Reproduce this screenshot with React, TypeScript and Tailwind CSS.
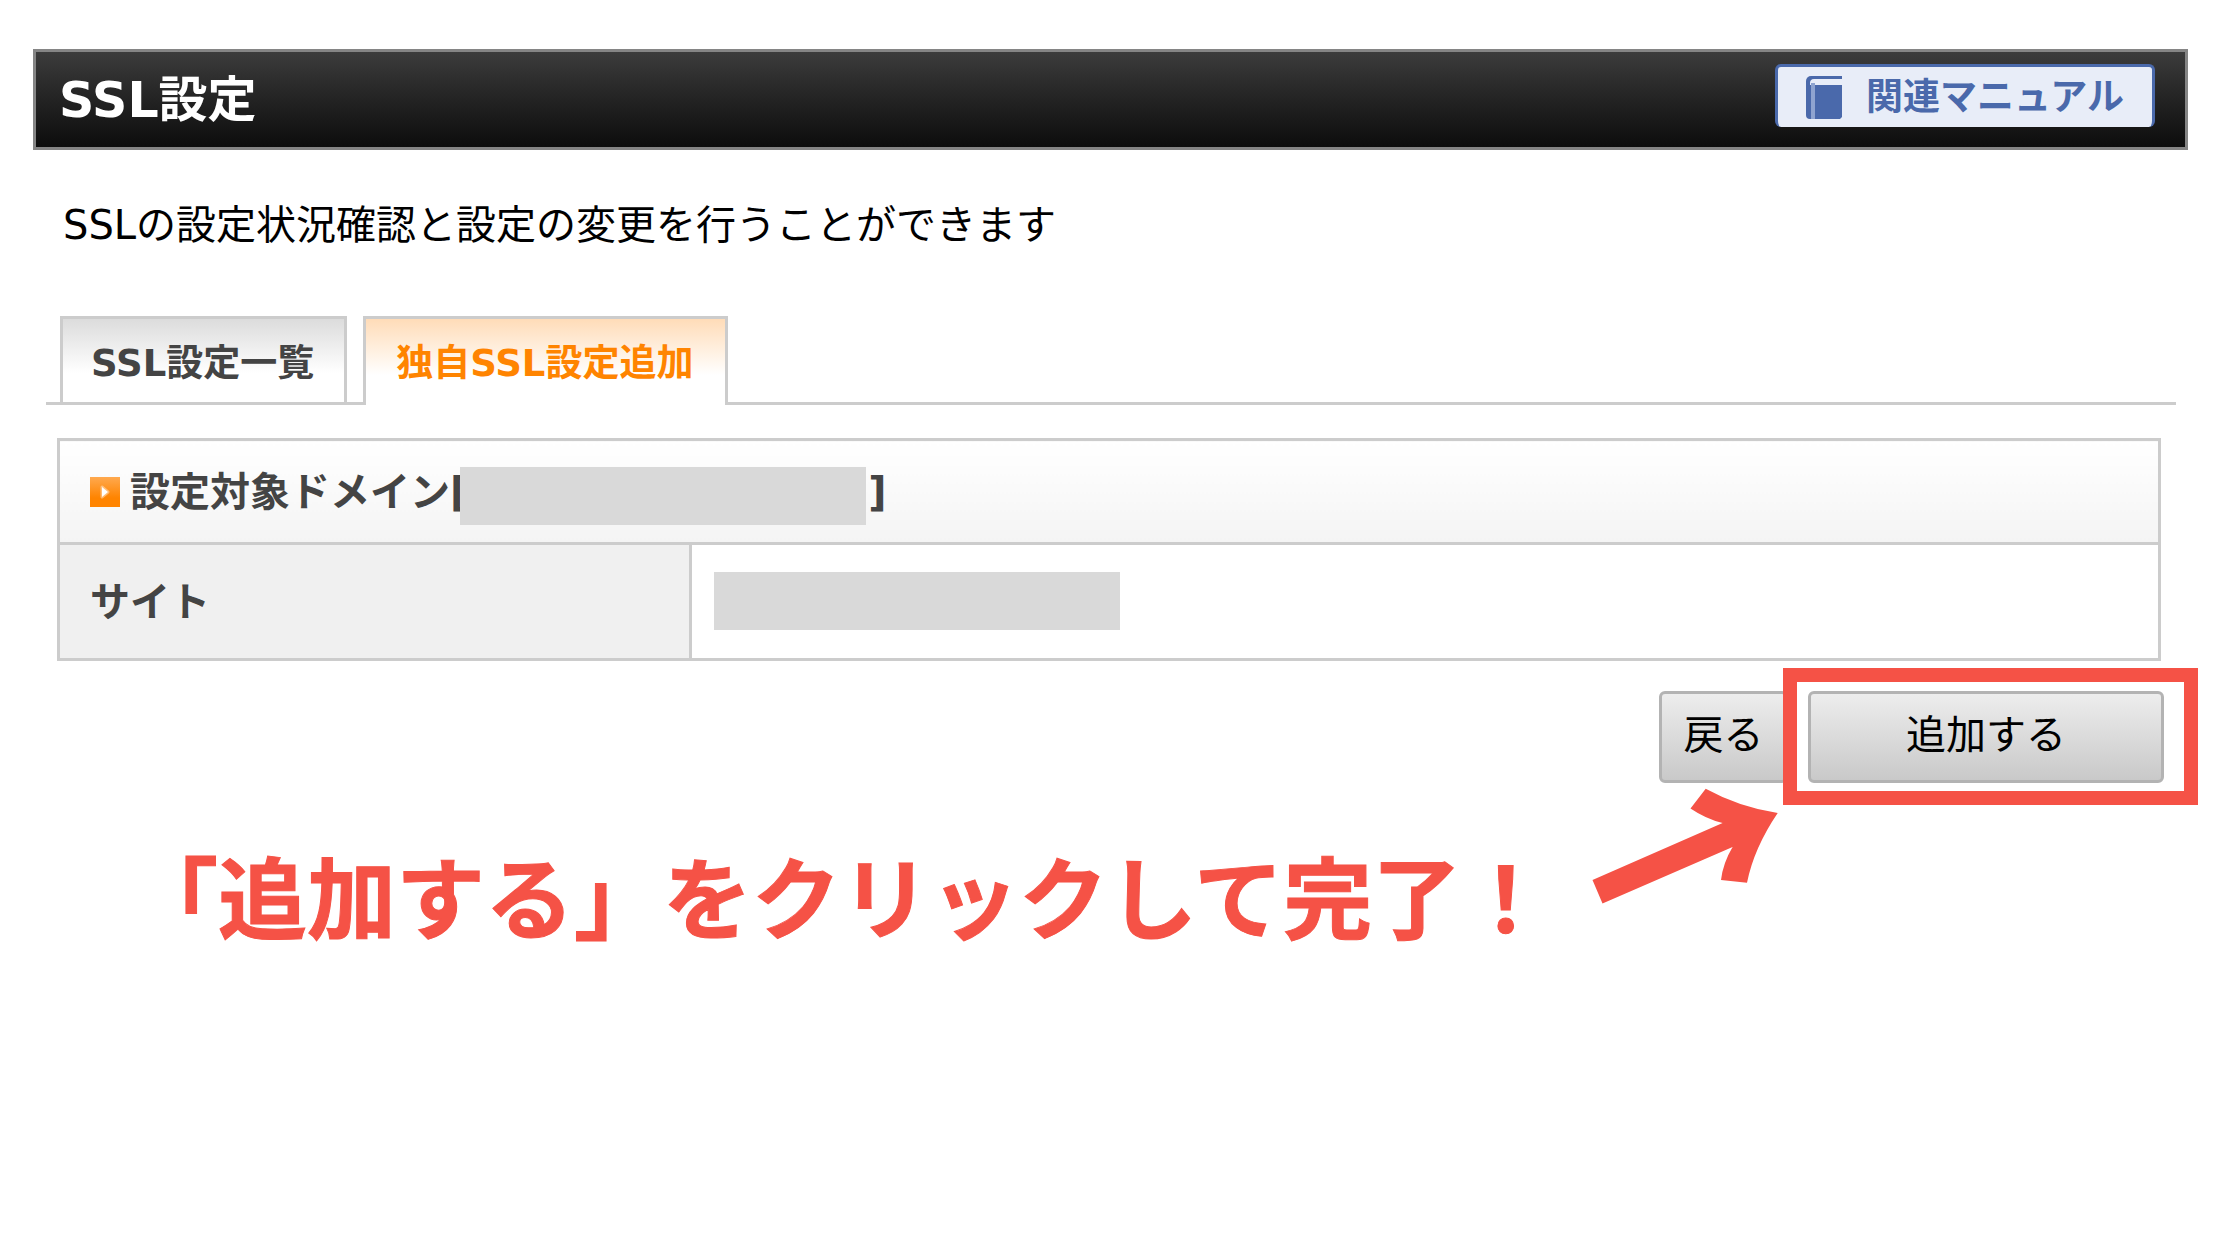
const BookIcon = () => (
  <svg className="h-[43px] w-9 shrink-0" viewBox="0 0 36 43" aria-hidden="true">
    <path d="M5 0h31v43H4a4 4 0 0 1-4-4V5a5 5 0 0 1 5-5z" fill="#4a69ab" />
    <path d="M36 3H8C5 3 4 5 4 7V9H36z" fill="#e8edf8" />
    <path d="M5 7h4v36H5z" fill="#8fa4d0" />
    <path d="M34 43h2v-2z" fill="#e8edf8" />
  </svg>
);

const BulletIcon = () => (
  <svg className="size-[30px] shrink-0" viewBox="0 0 30 30" aria-hidden="true">
    <defs>
      <linearGradient id="bullet" x1="0" y1="0" x2="0" y2="1">
        <stop offset="0" stopColor="#ffa94f" />
        <stop offset="0.7" stopColor="#ff8400" />
      </linearGradient>
    </defs>
    <path d="M0 0h30v30H0z" fill="url(#bullet)" />
    <path d="M12 10l6 5-6 5z" fill="#fff" stroke="#fff" strokeOpacity="0.4" strokeWidth="3" strokeLinejoin="round" />
  </svg>
);

const ArrowIcon = () => (
  <svg className="h-[116px] w-[186px] shrink-0" viewBox="1592 788 186 116" aria-hidden="true">
    <path
      d="M1592.500 880L1722.600 823Q1706 819 1690.500 808.500L1705.700 788.700Q1739 807 1777.700 813Q1754 848 1747 882.700L1721 880Q1723 863 1732.600 847L1602.500 903.500z"
      fill="#f55246"
    />
  </svg>
);

const PageHeader = () => (
  <header className="flex h-[101px] items-start justify-between border-[3px] border-[#858585] bg-linear-to-b from-[#3c3c3c] to-[#0d0d0d] pl-[23px] pr-[30px]">
    <h1 className="self-center pt-[2px] text-[49px] font-bold leading-none text-white">SSL設定</h1>
    <a
      href="#manual"
      className="mt-3 flex h-[63px] items-center gap-6 rounded-md border-[3px] border-b-0 border-[#4a69ab] bg-[#e8edf8] px-7 text-[37px] font-bold leading-none text-[#4a69ab]"
    >
      <BookIcon />
      <span>関連マニュアル</span>
    </a>
  </header>
);

const Tabs = () => (
  <div
    role="tablist"
    className="ml-[13px] mr-3 flex gap-4 border-b-[3px] border-[#ccc] pl-[14px] text-[37px] font-bold leading-none"
  >
    <button
      type="button"
      role="tab"
      aria-selected="false"
      className="h-[86px] border-[3px] border-b-0 border-[#ccc] bg-linear-to-b from-[#dcdcdc] to-white to-65% pl-7 pr-[30px] pt-[6px] text-[#444]"
    >
      SSL設定一覧
    </button>
    <button
      type="button"
      role="tab"
      aria-selected="true"
      className="-mb-[3px] h-[89px] border-[3px] border-b-0 border-[#ccc] bg-linear-to-b from-[#ffdcb8] to-white to-65% pl-[30px] pr-8 pt-[2px] text-[#ff8400]"
    >
      独自SSL設定追加
    </button>
  </div>
);

const DomainTable = () => (
  <table className="w-full table-fixed border-collapse text-left text-[40px] leading-none text-[#444]">
    <colgroup>
      <col className="w-[30.1%]" />
      <col />
    </colgroup>
    <thead>
      <tr className="h-[104px]">
        <th colSpan={2} className="border-[3px] border-[#ccc] bg-linear-to-b from-white to-[#f4f4f4] py-0 pl-[30px]">
          <div className="flex items-center">
            <BulletIcon />
            <span className="ml-[10px]">設定対象ドメイン[</span>
            <span className="-ml-2 mt-2 h-[58px] w-[406px] bg-[#d9d9d9]" />
            <span className="ml-[2px]">]</span>
          </div>
        </th>
      </tr>
    </thead>
    <tbody>
      <tr className="h-[116px]">
        <th scope="row" className="border-[3px] border-[#ccc] bg-[#f0f0f0] py-0 pl-[30px]">
          サイト
        </th>
        <td className="border-[3px] border-[#ccc] pb-[2px] pl-[22px] pt-0">
          <div className="h-[58px] w-[406px] bg-[#d9d9d9]" />
        </td>
      </tr>
    </tbody>
  </table>
);

const buttonStyle =
  "h-[92px] rounded-md border-[3px] border-[#b3b3b3] bg-linear-to-b from-[#ededed] to-[#c9c9c9] pb-1 text-[40px] leading-none text-black";

const Actions = () => (
  <div className="mr-6 mt-[30px] flex justify-end gap-5">
    <button type="button" className={`${buttonStyle} w-[129px]`}>
      戻る
    </button>
    <div className="relative">
      <button type="button" className={`${buttonStyle} w-[356px]`}>
        追加する
      </button>
      <div className="pointer-events-none absolute -bottom-[22px] -left-[25px] -right-[34px] -top-[23px] border-[14px] border-[#f55246]" />
    </div>
  </div>
);

const Callout = () => (
  <div className="ml-24 mt-[5px] flex items-start gap-[42px]">
    <p className="mt-[69px] whitespace-nowrap text-[89px] font-bold leading-none text-[#f55246] [-webkit-text-stroke:1px_#f55246]">
      「追加する」をクリックして完了！
    </p>
    <ArrowIcon />
  </div>
);

export default function App() {
  return (
    <main
      lang="ja"
      className="min-h-screen bg-white pb-12 pl-[33px] pr-[52px] pt-[49px] font-['DejaVu_Sans','Noto_Sans_CJK_JP',sans-serif]"
    >
      <PageHeader />
      <p className="ml-[30px] mt-[55px] text-[40px] leading-[40px] text-black">
        SSLの設定状況確認と設定の変更を行うことができます
      </p>
      <div className="mt-[71px]">
        <Tabs />
      </div>
      <div className="ml-6 mr-[27px] mt-[33px]">
        <DomainTable />
      </div>
      <Actions />
      <Callout />
    </main>
  );
}
